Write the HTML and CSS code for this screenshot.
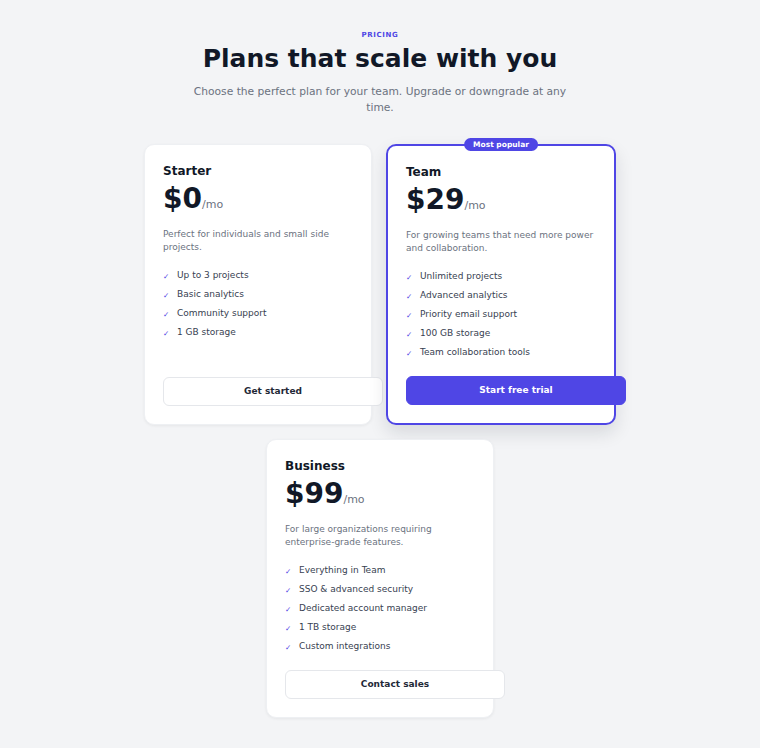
FILE: index.html
```html
<!DOCTYPE html>
<html lang="en">
<head>
  <meta charset="UTF-8">
  <title>Pricing</title>
  <meta name="viewport" content="width=device-width, initial-scale=1.0">
  <link rel="stylesheet" href="styles.css">
</head>
<body>
  <header class="intro">
    <div class="eyebrow">PRICING</div>
    <h1>Plans that scale with you</h1>
    <p class="lead">Choose the perfect plan for your team. Upgrade or downgrade at any time.</p>
  </header>

  <section class="plans">
    <div class="plan">
      <h3>Starter</h3>
      <div class="price">$0<span>/mo</span></div>
      <p class="desc">Perfect for individuals and small side projects.</p>
      <ul class="features">
        <li>Up to 3 projects</li>
        <li>Basic analytics</li>
        <li>Community support</li>
        <li>1 GB storage</li>
      </ul>
      <button class="btn">Get started</button>
    </div>

    <div class="plan featured">
      <div class="badge">Most popular</div>
      <h3>Team</h3>
      <div class="price">$29<span>/mo</span></div>
      <p class="desc">For growing teams that need more power and collaboration.</p>
      <ul class="features">
        <li>Unlimited projects</li>
        <li>Advanced analytics</li>
        <li>Priority email support</li>
        <li>100 GB storage</li>
        <li>Team collaboration tools</li>
      </ul>
      <button class="btn primary">Start free trial</button>
    </div>

    <div class="plan">
      <h3>Business</h3>
      <div class="price">$99<span>/mo</span></div>
      <p class="desc">For large organizations requiring enterprise-grade features.</p>
      <ul class="features">
        <li>Everything in Team</li>
        <li>SSO &amp; advanced security</li>
        <li>Dedicated account manager</li>
        <li>1 TB storage</li>
        <li>Custom integrations</li>
      </ul>
      <button class="btn">Contact sales</button>
    </div>
  </section>
</body>
</html>
```

FILE: styles.css
```css
body {
  margin: 0;
  padding: 30px 0 40px;
  background: #f3f4f6;
  font-family: 'DejaVu Sans', sans-serif;
  color: #111827;
}

.intro {
  text-align: center;
}

.eyebrow {
  font-size: 7px;
  line-height: 10px;
  font-weight: bold;
  letter-spacing: 0.09em;
  color: #4f46e5;
}

h1 {
  margin: 4px 0 0;
  font-size: 25px;
  line-height: 30px;
  font-weight: bold;
  color: #111827;
}

.lead {
  max-width: 380px;
  margin: 10px auto 0;
  font-size: 10.7px;
  line-height: 16px;
  color: #6b7280;
}

.plans {
  display: flex;
  flex-wrap: wrap;
  justify-content: center;
  gap: 14px;
  max-width: 560px;
  margin: 28px auto 0;
}

.plan {
  position: relative;
  width: 190px;
  padding: 19px 18px 18px;
  background: #fff;
  border: 1px solid #eef0f3;
  border-radius: 10px;
  box-shadow: 0 1px 3px rgba(0, 0, 0, 0.06);
  display: flex;
  flex-direction: column;
}

.plan.featured {
  border: 2px solid #4f46e5;
  box-shadow: 0 8px 18px rgba(17, 24, 39, 0.12);
}

.badge {
  position: absolute;
  top: -8px;
  left: 50%;
  transform: translateX(-50%);
  padding: 0 9px;
  background: #4f46e5;
  color: #fff;
  font-size: 7.5px;
  line-height: 13px;
  font-weight: bold;
  border-radius: 10px;
  white-space: nowrap;
}

h3 {
  margin: 0;
  font-size: 12px;
  line-height: 14px;
  font-weight: bold;
}

.price {
  margin-top: 4px;
  font-size: 28px;
  font-weight: bold;
  color: #111827;
}

.price span {
  font-size: 11px;
  font-weight: normal;
  color: #6b7280;
}

.desc {
  margin: 13px 0 0;
  font-size: 9px;
  line-height: 13px;
  color: #6b7280;
}

.features {
  list-style: none;
  padding: 0;
  margin: 15px 0 18px;
  display: flex;
  flex-direction: column;
  gap: 7px;
}

.features li {
  font-size: 9px;
  line-height: 12px;
  color: #374151;
  display: flex;
  gap: 8px;
}

.features li::before {
  content: '✓';
  width: 6px;
  height: 12px;
  font-size: 7.5px;
  line-height: 15px;
  color: #4f46e5;
}

.btn {
  margin-top: auto;
  width: 100%;
  box-sizing: content-box;
  padding: 8px 14px;
  font-family: inherit;
  font-size: 9px;
  line-height: 11px;
  font-weight: bold;
  color: #1f2937;
  background: #fff;
  border: 1px solid #e5e7eb;
  border-radius: 6px;
  cursor: pointer;
}

.btn.primary {
  background: #4f46e5;
  border-color: #4f46e5;
  color: #fff;
}
```
